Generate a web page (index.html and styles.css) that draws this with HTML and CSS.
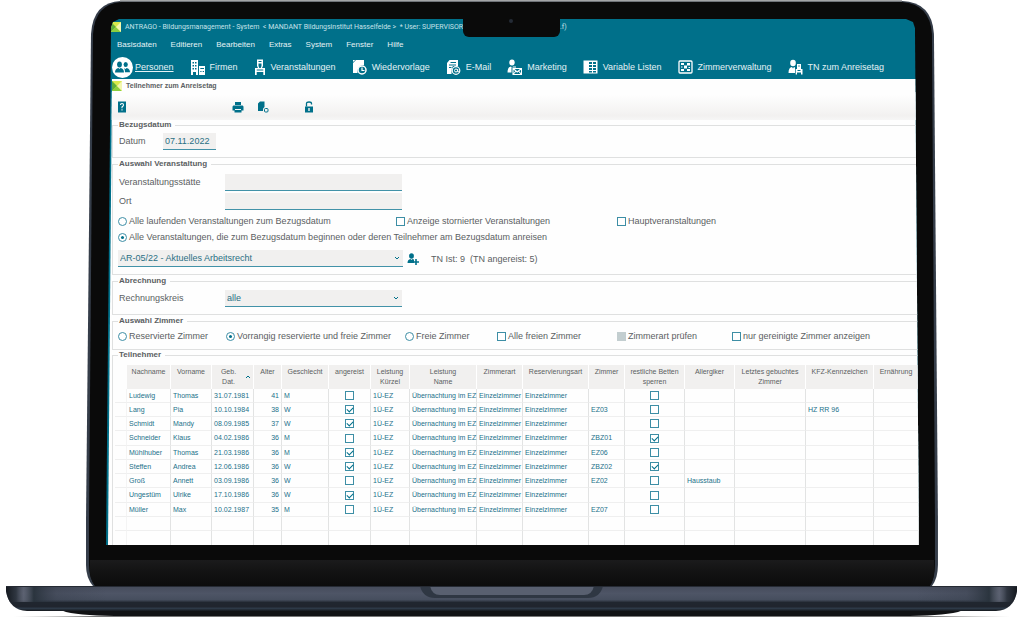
FILE: index.html
```html
<!DOCTYPE html>
<html lang="de">
<head>
<meta charset="utf-8">
<meta name="viewport" content="width=device-width, initial-scale=1">
<title>ANTRAGO - Teilnehmer zum Anreisetag</title>
<link rel="stylesheet" href="styles.css">
</head>
<body>
<main class="laptop">
  <div class="lid">
    <svg class="lid-shape" viewBox="0 0 852 586" preserveAspectRatio="none" aria-hidden="true">
      <defs>
        <linearGradient id="chin" x1="0" y1="0" x2="0" y2="1"><stop offset="0" stop-color="#1b1b1c"/><stop offset=".5" stop-color="#121212"/><stop offset="1" stop-color="#0c0c0c"/></linearGradient>
      </defs>
      <path d="M35 1H816Q846 2 848 34L852 520V565Q852 578 846 586H7Q0 578 0 565V520L5 34Q7 2 35 1Z" fill="#353d49"/>
      <path d="M35 2H816Q844 4 846 34L849 520V565Q849 578 844 586H9Q3 578 3 565V520L7 34Q9 4 35 2Z" fill="#0a0a0a"/>
      <path d="M4 560H848V565Q849 578 844 586H9Q3 578 4 565Z" fill="url(#chin)"/>
      <path d="M34 1H816" stroke="#85878a" stroke-width="1.4"/>
    </svg>
    <div class="screen">
      <header class="app-head">
        <div class="title-bar">
          <svg class="logo" viewBox="0 0 10 10" aria-hidden="true"><path d="M0 0H10V10H0Z" fill="#d8ea4c"/><path d="M0 0L5 5L0 10Z" fill="#5fae3c"/><path d="M0 10L5 5L10 10Z" fill="#8ccf3e"/><path d="M10 0V10L5 5Z" fill="#f3f7b0"/></svg>
          <span class="title-text">ANTRAGO - Bildungsmanagement - System &nbsp;&lt; MANDANT Bildungsinstitut Hasselfelde &gt; &nbsp;* User: SUPERVISOR *</span>
          <span>.f)</span>
        </div>
        <nav class="menu">
          <button type="button">Basisdaten</button><button type="button">Editieren</button><button type="button">Bearbeiten</button><button type="button">Extras</button><button type="button">System</button><button type="button">Fenster</button><button type="button">Hilfe</button>
        </nav>
        <nav class="modules">
          <a href="#personen" class="active"><svg class="round" viewBox="0 0 21 21" aria-hidden="true"><circle cx="10.500" cy="10.500" r="10.500" fill="#fff"/><g fill="#00708a"><ellipse cx="7.500" cy="7.500" rx="2.400" ry="2.900"/><path d="M3 15.500Q3 11.500 6.500 11L7.500 12L8.500 11Q12 11.500 12 15.500Z"/><ellipse cx="13.700" cy="7.500" rx="2.100" ry="2.600"/><path d="M12 11.300L13.700 11.900L14.500 10.900Q18 11.500 18 15.300H13Q13 12.500 12 11.300Z"/></g></svg>Personen</a>
          <a href="#firmen"><svg viewBox="0 0 15 16" aria-hidden="true"><path fill-rule="evenodd" d="M1 1H8V16H6V13H3V16H1ZM2.500 3V4.500H4V3ZM5 3V4.500H6.500V3ZM2.500 6V7.500H4V6ZM5 6V7.500H6.500V6ZM2.500 9V10.500H4V9ZM5 9V10.500H6.500V9ZM9 7H15V16H9ZM10.300 9V10H14V9ZM10.300 12V13H11.500V12ZM12.700 12V13H14V12Z"/></svg>Firmen</a>
          <a href="#veranstaltungen"><svg class="narrow" viewBox="0 0 12 16" aria-hidden="true"><path fill-rule="evenodd" d="M3 0.500H9V7L8 9H11V16H9.300V13H2.700V16H1V9H4L3 7ZM4.500 2V3H7.500V2ZM4.500 4.500V7L5.300 9H6.700L7.500 7V4.500ZM2.700 10.500V11.500H9.300V10.500Z"/></svg>Veranstaltungen</a>
          <a href="#wiedervorlage"><svg viewBox="0 0 15 16" aria-hidden="true"><path d="M4 1H12V6Q5 6 5.500 14H1V4ZM1 3L3.300 1H1Z"/><circle cx="10" cy="11" r="4" fill="none" stroke="#fff" stroke-width="1.500"/><path d="M10 8.500V11.500H12.500" fill="none" stroke="#fff" stroke-width="1.200"/></svg>Wiedervorlage</a>
          <a href="#email"><svg viewBox="0 0 15 16" aria-hidden="true"><path fill-rule="evenodd" d="M3.500 1H12V7H7Q5.500 8 5.500 15H1V4ZM4.500 3V4H10V3ZM3 5.500V6.500H10V5.500ZM3 8V9H5.500V8Z"/><circle cx="10" cy="11.500" r="3.800" fill="none" stroke="#fff" stroke-width="1.200"/><circle cx="10" cy="11.500" r="1.500" fill="none" stroke="#fff"/><path d="M11.700 10V12.800H13.500" fill="none" stroke="#fff"/></svg>E-Mail</a>
          <a href="#marketing"><svg viewBox="0 0 15 16" aria-hidden="true"><ellipse cx="5" cy="3.500" rx="2.700" ry="3"/><path d="M0.500 13.500Q0.500 8 4 7.500L5 9L6 7.500H9V8.500H4.500V13.500Z"/><path d="M6 9.500H14.500V15.500H6ZM6 9.500L10.200 13L14.500 9.500M6 15.500L9 12M14.500 15.500L11.500 12" fill="none" stroke="#fff" stroke-width="1.100"/></svg>Marketing</a>
          <a href="#listen"><svg viewBox="0 0 15 16" aria-hidden="true"><path fill-rule="evenodd" d="M0.500 1.500H14.500V14.500H0.500ZM6 3V5H9V3ZM10 3V5H13V3ZM6 6V8H9V6ZM10 6V8H13V6ZM6 9V11H9V9ZM10 9V11H13V9ZM6 12V13.500H9V12ZM10 12V13.500H13V12Z"/></svg>Variable Listen</a>
          <a href="#zimmer"><svg viewBox="0 0 15 16" aria-hidden="true"><rect x="1" y="2" width="13" height="12" rx="1" fill="none" stroke="#fff" stroke-width="1.300"/><path d="M3 4H6V6H3ZM9 4H12V6.500H9ZM3 10H6V12H3ZM9 10H12V12H9ZM6 6.500H9V9.500H6ZM3 7.500H4.500V8.500H3ZM10.500 8H12V9H10.500Z"/></svg>Zimmerverwaltung</a>
          <a href="#anreise"><svg viewBox="0 0 15 16" aria-hidden="true"><ellipse cx="5" cy="4" rx="2.800" ry="3.200"/><path d="M0.500 14Q0.500 8.500 4 8L5 9.500L6 8L7 8.500V14Z"/><path fill-rule="evenodd" d="M9 5H13V10H14.500V15.500H13V13.500H9V15.500H7.700V10H9ZM10.300 6.500V7.500H11.700V6.500ZM9.500 11V12H12.500V11Z"/></svg>TN zum Anreisetag</a>
        </nav>
      </header>
      <section class="window">
        <h1><svg class="logo" viewBox="0 0 10 10" aria-hidden="true"><path d="M0 0H10V10H0Z" fill="#d8ea4c"/><path d="M0 0L5 5L0 10Z" fill="#5fae3c"/><path d="M0 10L5 5L10 10Z" fill="#8ccf3e"/><path d="M10 0V10L5 5Z" fill="#f3f7b0"/></svg>Teilnehmer zum Anreisetag</h1>
        <div class="tools">
          <button type="button" aria-label="Hilfe"><svg viewBox="0 0 12 12"><path d="M2 0.500H10V11.500H2Z"/><path d="M4.500 4Q4.500 2.500 6 2.500T7.500 4Q7.500 5 6 6V7.200M6 8.300V9.600" fill="none" stroke="#fff" stroke-width="1.100"/></svg></button>
          <button type="button" aria-label="Drucken"><svg viewBox="0 0 12 12"><path fill-rule="evenodd" d="M3 1H9V4H3ZM1.500 4.500H10.500Q11.500 4.500 11.500 6V9.500H9.500V11.500H2.500V9.500H0.500V6Q0.500 4.500 1.500 4.500ZM3 8V9H9V8Z"/></svg></button>
          <button type="button" aria-label="Aktualisieren"><svg viewBox="0 0 12 12"><path d="M3 0.500H7.500V6Q5.500 7 6 10H1V2.500Z"/><rect x="7.500" y="7.500" width="3.500" height="3.500" rx="1" fill="none" stroke="#00708a"/></svg></button>
          <button type="button" aria-label="Sperren"><svg viewBox="0 0 12 12"><path fill-rule="evenodd" d="M2 5.500H10V11.500H2ZM5.300 7V10H6.700V7Z"/><path d="M3.500 5.500V2.500Q3.500 1 6 1T8.500 2.500V3.500" fill="none" stroke="#00708a" stroke-width="1.300"/></svg></button>
        </div>
        <form>
          <fieldset class="f-date">
            <legend>Bezugsdatum</legend>
            <div class="row short"><label for="datum">Datum</label><input id="datum" class="field" type="text" value="07.11.2022"></div>
          </fieldset>
          <fieldset class="f-event">
            <legend>Auswahl Veranstaltung</legend>
            <div class="fields">
              <div class="row"><label for="staette">Veranstaltungsstätte</label><input id="staette" class="field" type="text"></div>
              <div class="row"><label for="ort">Ort</label><input id="ort" class="field" type="text"></div>
            </div>
            <div class="options three">
              <label><input type="radio" name="auswahl">Alle laufenden Veranstaltungen zum Bezugsdatum</label>
              <label><input type="checkbox">Anzeige stornierter Veranstaltungen</label>
              <label><input type="checkbox">Hauptveranstaltungen</label>
            </div>
            <div class="options"><label><input type="radio" name="auswahl" checked>Alle Veranstaltungen, die zum Bezugsdatum beginnen oder deren Teilnehmer am Bezugsdatum anreisen</label></div>
            <div class="pick">
              <span class="select"><select aria-label="Veranstaltung"><option>AR-05/22 - Aktuelles Arbeitsrecht</option></select><svg viewBox="0 0 6 6" aria-hidden="true"><path d="M1 2L3 4L5 2"/></svg></span>
              <button type="button" aria-label="Teilnehmer hinzufügen"><svg viewBox="0 0 12 12"><ellipse cx="4.500" cy="3" rx="2.400" ry="2.700"/><path d="M0.500 10Q0.500 6.500 3.500 6L4.500 7L5.500 6L7 6.500V10Z"/><path d="M9 6V12M6 9H12" stroke="#00708a" stroke-width="1.600"/></svg></button>
              <span>TN Ist: 9 &nbsp;(TN angereist: 5)</span>
            </div>
          </fieldset>
          <fieldset class="f-bill">
            <legend>Abrechnung</legend>
            <div class="row"><label for="kreis">Rechnungskreis</label><span class="select"><select id="kreis"><option>alle</option></select><svg viewBox="0 0 6 6" aria-hidden="true"><path d="M1 2L3 4L5 2"/></svg></span></div>
          </fieldset>
          <fieldset class="f-room">
            <legend>Auswahl Zimmer</legend>
            <div class="options six">
              <label><input type="radio" name="zimmer">Reservierte Zimmer</label>
              <label><input type="radio" name="zimmer" checked>Vorrangig reservierte und freie Zimmer</label>
              <label><input type="radio" name="zimmer">Freie Zimmer</label>
              <label><input type="checkbox">Alle freien Zimmer</label>
              <label><input type="checkbox" disabled>Zimmerart prüfen</label>
              <label><input type="checkbox">nur gereinigte Zimmer anzeigen</label>
            </div>
          </fieldset>
          <fieldset class="f-list">
            <legend>Teilnehmer</legend>
            <table>
              <colgroup><col class="c-grip"><col class="c-name"><col class="c-first"><col class="c-born"><col class="c-age"><col class="c-sex"><col class="c-here"><col class="c-code"><col class="c-service"><col class="c-kind"><col class="c-booking"><col class="c-room"><col class="c-beds"><col class="c-allergy"><col class="c-last"><col class="c-plate"><col></colgroup>
              <thead><tr><td></td><th>Nachname</th><th>Vorname</th><th class="sorted">Geb.<br>Dat.<svg viewBox="0 0 6 6" aria-hidden="true"><path d="M1 4L3 2L5 4"/></svg></th><th>Alter</th><th>Geschlecht</th><th>angereist</th><th>Leistung<br>Kürzel</th><th>Leistung<br>Name</th><th>Zimmerart</th><th>Reservierungsart</th><th>Zimmer</th><th>restliche Betten<br>sperren</th><th>Allergiker</th><th>Letztes gebuchtes<br>Zimmer</th><th>KFZ-Kennzeichen</th><th>Ernährung</th></tr></thead>
              <tbody>
                <tr><td></td><td>Ludewig</td><td>Thomas</td><td>31.07.1981</td><td class="num">41</td><td>M</td><td class="tick"><input type="checkbox" aria-label="angereist"></td><td>1Ü-EZ</td><td>Übernachtung im EZ</td><td>Einzelzimmer</td><td>Einzelzimmer</td><td></td><td class="tick"><input type="checkbox" aria-label="sperren"></td><td></td><td></td><td></td><td></td></tr>
                <tr><td></td><td>Lang</td><td>Pia</td><td>10.10.1984</td><td class="num">38</td><td>W</td><td class="tick"><input type="checkbox" aria-label="angereist" checked></td><td>1Ü-EZ</td><td>Übernachtung im EZ</td><td>Einzelzimmer</td><td>Einzelzimmer</td><td>EZ03</td><td class="tick"><input type="checkbox" aria-label="sperren"></td><td></td><td></td><td>HZ RR 96</td><td></td></tr>
                <tr><td></td><td>Schmidt</td><td>Mandy</td><td>08.09.1985</td><td class="num">37</td><td>W</td><td class="tick"><input type="checkbox" aria-label="angereist" checked></td><td>1Ü-EZ</td><td>Übernachtung im EZ</td><td>Einzelzimmer</td><td>Einzelzimmer</td><td></td><td class="tick"><input type="checkbox" aria-label="sperren"></td><td></td><td></td><td></td><td></td></tr>
                <tr><td></td><td>Schneider</td><td>Klaus</td><td>04.02.1986</td><td class="num">36</td><td>M</td><td class="tick"><input type="checkbox" aria-label="angereist"></td><td>1Ü-EZ</td><td>Übernachtung im EZ</td><td>Einzelzimmer</td><td>Einzelzimmer</td><td>ZBZ01</td><td class="tick"><input type="checkbox" aria-label="sperren" checked></td><td></td><td></td><td></td><td></td></tr>
                <tr><td></td><td>Mühlhuber</td><td>Thomas</td><td>21.03.1986</td><td class="num">36</td><td>M</td><td class="tick"><input type="checkbox" aria-label="angereist" checked></td><td>1Ü-EZ</td><td>Übernachtung im EZ</td><td>Einzelzimmer</td><td>Einzelzimmer</td><td>EZ06</td><td class="tick"><input type="checkbox" aria-label="sperren"></td><td></td><td></td><td></td><td></td></tr>
                <tr><td></td><td>Steffen</td><td>Andrea</td><td>12.06.1986</td><td class="num">36</td><td>W</td><td class="tick"><input type="checkbox" aria-label="angereist" checked></td><td>1Ü-EZ</td><td>Übernachtung im EZ</td><td>Einzelzimmer</td><td>Einzelzimmer</td><td>ZBZ02</td><td class="tick"><input type="checkbox" aria-label="sperren" checked></td><td></td><td></td><td></td><td></td></tr>
                <tr><td></td><td>Groß</td><td>Annett</td><td>03.09.1986</td><td class="num">36</td><td>W</td><td class="tick"><input type="checkbox" aria-label="angereist"></td><td>1Ü-EZ</td><td>Übernachtung im EZ</td><td>Einzelzimmer</td><td>Einzelzimmer</td><td>EZ02</td><td class="tick"><input type="checkbox" aria-label="sperren"></td><td>Hausstaub</td><td></td><td></td><td></td></tr>
                <tr><td></td><td>Ungestüm</td><td>Ulrike</td><td>17.10.1986</td><td class="num">36</td><td>W</td><td class="tick"><input type="checkbox" aria-label="angereist" checked></td><td>1Ü-EZ</td><td>Übernachtung im EZ</td><td>Einzelzimmer</td><td>Einzelzimmer</td><td></td><td class="tick"><input type="checkbox" aria-label="sperren"></td><td></td><td></td><td></td><td></td></tr>
                <tr><td></td><td>Müller</td><td>Max</td><td>10.02.1987</td><td class="num">35</td><td>M</td><td class="tick"><input type="checkbox" aria-label="angereist"></td><td>1Ü-EZ</td><td>Übernachtung im EZ</td><td>Einzelzimmer</td><td>Einzelzimmer</td><td>EZ07</td><td class="tick"><input type="checkbox" aria-label="sperren"></td><td></td><td></td><td></td><td></td></tr>
                <tr><td></td><td></td><td></td><td></td><td></td><td></td><td></td><td></td><td></td><td></td><td></td><td></td><td></td><td></td><td></td><td></td><td></td></tr>
                <tr><td></td><td></td><td></td><td></td><td></td><td></td><td></td><td></td><td></td><td></td><td></td><td></td><td></td><td></td><td></td><td></td><td></td></tr>
              </tbody>
            </table>
          </fieldset>
        </form>
      </section>
    </div>
    <div class="notch"><i class="camera"></i></div>
  </div>
  <svg class="base" viewBox="0 0 1024 31" preserveAspectRatio="none" aria-hidden="true">
    <defs>
      <linearGradient id="deck" x1="0" y1="0" x2="0" y2="1"><stop offset="0" stop-color="#454b5a"/><stop offset=".3" stop-color="#4e5566"/><stop offset=".55" stop-color="#464e5e"/><stop offset=".66" stop-color="#20262f"/><stop offset=".82" stop-color="#20252e"/><stop offset=".9" stop-color="#2d3947"/><stop offset="1" stop-color="#15181c"/></linearGradient>
      <linearGradient id="edges" x1="0" y1="0" x2="1" y2="0"><stop offset="0" stop-color="#14181e"/><stop offset=".02" stop-color="#2c333d" stop-opacity=".9"/><stop offset=".035" stop-color="#666b7a" stop-opacity=".6"/><stop offset=".055" stop-color="#27313a" stop-opacity=".9"/><stop offset=".1" stop-color="#333a47" stop-opacity=".3"/><stop offset=".2" stop-color="#333a47" stop-opacity="0"/></linearGradient>
      <linearGradient id="foot" x1="0" y1="0" x2="1" y2="0"><stop offset="0" stop-color="#bbb" stop-opacity="0"/><stop offset=".08" stop-color="#777"/><stop offset=".92" stop-color="#777"/><stop offset="1" stop-color="#bbb" stop-opacity="0"/></linearGradient>
      <clipPath id="body"><path d="M6 0H1017V5Q1014 24 996 25H27Q9 24 6 5Z"/></clipPath>
    </defs>
    <path d="M14 30H1010V31H14Z" fill="url(#foot)"/>
    <path d="M58 23H966L958 26Q940 30 900 30H124Q84 30 66 26Z" fill="#111214"/>
    <g clip-path="url(#body)">
      <path d="M6 0H1017V25H6Z" fill="url(#deck)"/>
      <path d="M6 0H512V16H6Z" fill="url(#edges)"/>
      <path d="M6 0H512V16H6Z" fill="url(#edges)" transform="matrix(-1 0 0 1 1023 0)"/>
    </g>
    <path d="M420 0H603Q600 12 588 12H435Q423 12 420 0Z" fill="#2f3743"/>
    <path d="M430 0H594Q592 9 584 9H440Q432 9 430 0Z" fill="#596070"/>
    <path d="M6 0.500H1017" stroke="#252a33"/>
  </svg>
</main>
</body>
</html>
```

FILE: styles.css
```css
* { box-sizing: border-box; }

:root {
  --teal: #00708a;
  --line: #dfe0e0;
  --soft: #f1f0ef;
}

body {
  margin: 0;
  background: #fff;
  color: #5b6062;
  font: 9px/10px "Liberation Sans", Arial, sans-serif;
}

button, input, select { font: inherit; color: inherit; }
button { border: 0; padding: 0; background: none; }

/* Device frame */
.lid {
  position: relative;
  width: 83.2%;
  margin: 0 auto;
  padding: 19px 19px 41px 20px;
}
.lid-shape {
  position: absolute;
  inset: 0;
  width: 100%;
  height: 100%;
}
.screen {
  position: relative;
  background: var(--teal);
  clip-path: polygon(5px 9px, 7px 3px, 13px 0, calc(100% - 13px) 0, calc(100% - 6px) 3px, calc(100% - 4px) 9px, 100% 100%, 0 100%);
}
.notch {
  position: absolute;
  top: 16px;
  left: 50%;
  width: 97px;
  height: 21px;
  margin-left: -49px;
  border-radius: 0 0 6px 6px;
  background: #0a0a0a;
}
.camera {
  display: block;
  width: 4px;
  height: 4px;
  margin: 3px auto;
  border-radius: 50%;
  background: #242b36;
}
.base { display: block; width: 100%; height: 31px; }

/* Application header */
.app-head { color: #e4f2f5; }
.title-bar {
  display: flex;
  align-items: center;
  height: 15px;
  padding-left: 5px;
  font-family: Roboto, "Liberation Sans", sans-serif;
  font-size: 7px;
  color: #c6e2e9;
  white-space: nowrap;
}
.logo { width: 10px; height: 10px; margin-right: 4px; flex: none; }
.title-text { flex: 0 0 435px; }
.menu {
  display: flex;
  gap: 14px;
  height: 21px;
  padding-left: 11px;
  font-size: 8px;
  align-items: center;
}
.modules {
  display: flex;
  gap: 16px;
  height: 24px;
  padding-left: 6px;
  align-items: center;
}
.modules a {
  display: flex;
  align-items: center;
  gap: 5px;
  color: inherit;
  text-decoration: none;
  white-space: nowrap;
}
.modules a.active { gap: 2px; text-decoration: underline; }
.modules svg { width: 15px; height: 16px; fill: #fff; }
.modules svg.round { width: 21px; height: 21px; }
.modules svg.narrow { width: 12px; }

/* Inner window */
.window {
  background: #fefefe;
  clip-path: polygon(6px 0, 100% 0, 100% 100%, 2px 100%);
}
h1 {
  display: flex;
  align-items: center;
  height: 13px;
  margin: 0;
  padding-left: 6px;
  font-size: 7px;
}
.tools {
  display: grid;
  grid-template-columns: 116px 25px 46px 12px;
  align-items: center;
  height: 28px;
  padding: 2px 0 0 10px;
  background: linear-gradient(#fefefe 10%, #f2f1f0 85%, #f6f6f6);
}
.tools button, .pick button { display: block; width: 12px; height: 12px; }
.tools svg, .pick button svg { display: block; width: 12px; height: 12px; fill: var(--teal); }

/* Form groups */
fieldset {
  min-width: 0;
  margin: 0 0 1px 6px;
  padding: 0 0 0 5px;
  border: 1px solid var(--line);
  border-right: 0;
}
legend {
  padding: 0 4px 0 1px;
  font-size: 8px;
  font-weight: bold;
}
.f-date { padding-top: 3px; padding-bottom: 7px; }
.f-event { padding-top: 5px; padding-bottom: 7px; }
.f-bill { padding-top: 4px; padding-bottom: 7px; }
.f-room { padding-top: 2px; padding-bottom: 5px; margin-bottom: 0; }
.f-list { margin-bottom: 0; padding: 5px 0 0 2px; border-bottom: 0; }
.f-list legend { margin-left: 3px; }

.fields { display: grid; gap: 2px; }
.row {
  display: grid;
  grid-template-columns: 107px 177px;
  align-items: center;
}
.row.short { grid-template-columns: 45px 53px; }
.row label { padding-left: 1px; padding-bottom: 2px; }
.field, select {
  width: 100%;
  height: 17px;
  padding: 0 2px;
  border: 0;
  border-bottom: 1px solid #4292a8;
  border-radius: 0;
  background: var(--soft);
  color: #2a6f84;
  outline: 0;
}
select { display: block; appearance: none; }
.select { position: relative; }
.select svg, .sorted svg {
  position: absolute;
  right: 3px;
  top: 5px;
  width: 6px;
  height: 6px;
  fill: none;
  stroke: var(--teal);
}

.options { display: grid; align-items: center; height: 16px; }
.options.three { grid-template-columns: 278px 221px auto; margin-top: 3px; }
.options.six { grid-template-columns: 108px 179px 92px 120px 115px auto; }
.options label { display: flex; align-items: center; gap: 2px; white-space: nowrap; }

input[type="radio"], input[type="checkbox"] {
  appearance: none;
  display: grid;
  place-content: center;
  flex: none;
  width: 9px;
  height: 9px;
  margin: 0;
  border: 1px solid #3d8ea5;
  background: #fff;
}
input[type="radio"] { border-radius: 50%; }
input[type="radio"]:checked::before {
  content: "";
  width: 3px;
  height: 3px;
  border-radius: 50%;
  background: var(--teal);
}
input[type="checkbox"]:checked::before {
  content: "";
  width: 5px;
  height: 3px;
  margin-bottom: 1px;
  border: solid var(--teal);
  border-width: 0 0 1px 1px;
  transform: rotate(-45deg);
}
input[type="checkbox"]:disabled { border-color: #c3ced0; background: #c3ced0; }

.pick {
  display: grid;
  grid-template-columns: 285px 12px auto;
  column-gap: 4px;
  align-items: center;
  margin-top: 5px;
}
.pick > span:last-child { padding-left: 8px; }

/* Participant list */
table {
  width: 100%;
  table-layout: fixed;
  border-collapse: separate;
  border-spacing: 0;
  font-size: 7px;
  line-height: 10px;
}
.c-grip { width: 12px; }
.c-name { width: 44px; }
.c-first { width: 41px; }
.c-born, .c-here { width: 42px; }
.c-age { width: 28px; }
.c-sex { width: 47px; }
.c-code { width: 39px; }
.c-service { width: 67px; }
.c-kind { width: 46px; }
.c-booking { width: 66px; }
.c-room { width: 36px; }
.c-beds { width: 60px; }
.c-allergy { width: 50px; }
.c-last { width: 71px; }
.c-plate { width: 68px; }

th {
  position: relative;
  height: 24px;
  padding: 2px 0 0;
  border-right: 1px solid #fff;
  background: var(--soft);
  font-weight: normal;
  vertical-align: top;
  white-space: nowrap;
}
th.sorted { padding-right: 8px; }
th.sorted svg { top: 9px; right: 2px; }
tbody td {
  height: 14px;
  padding: 0 2px;
  border-right: 1px solid #e2e3e3;
  border-bottom: 1px solid #efefef;
  color: #23718a;
  white-space: nowrap;
}
tbody tr:nth-child(4n) td { height: 15px; }
thead td { padding: 0; }
tbody td:first-child { border-right-color: #f4f4f4; }
tbody tr:last-child td { border-bottom: 0; }
td.num { text-align: right; }
.tick input { margin: 0 auto; }
```
